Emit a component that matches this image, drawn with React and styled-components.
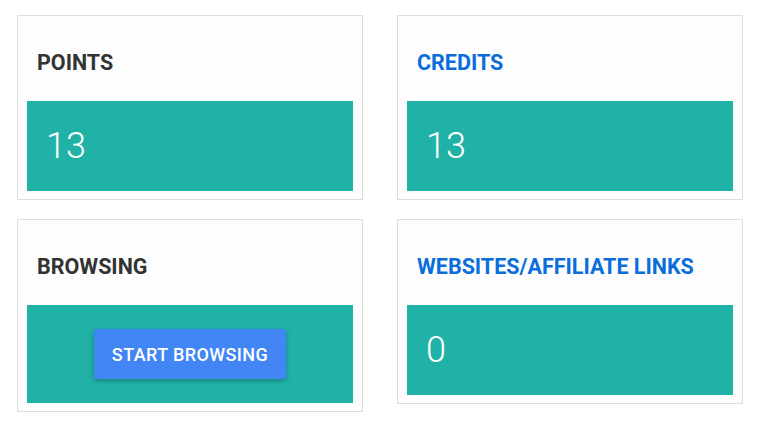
import React from "react";
import styled, { createGlobalStyle } from "styled-components";

const GlobalStyle = createGlobalStyle`
  body {
    margin: 0;
    background: #ffffff;
    font-family: Roboto, "Liberation Sans", sans-serif;
  }
`;

const Page = styled.main`
  display: grid;
  grid-template-columns: 346px 346px;
  column-gap: 34px;
  row-gap: 19px;
  align-items: start;
  padding: 15px 17px;
`;

const Card = styled.section`
  border: 1px solid #dddddd;
  background: #fdfdfd;
  padding: 0 9px 8px;
`;

const Title = styled.h3`
  margin: 0;
  padding: 35px 10px 27px;
  font-size: 21.5px;
  line-height: 23px;
  font-weight: 700;
  color: ${({ $link }) => ($link ? "#0a6ddb" : "#333333")};
`;

const Body = styled.div`
  background: #20b2a6;
  color: #ffffff;
  display: flex;
  align-items: center;
  justify-content: ${({ $center }) => ($center ? "center" : "flex-start")};
  padding: ${({ $center }) => ($center ? "24px 16px" : "25px 19px")};
`;

const Value = styled.span`
  font-size: 36px;
  line-height: 40px;
  font-weight: 300;
`;

const Button = styled.button`
  width: 192px;
  height: 50px;
  border: none;
  border-radius: 2px;
  background: #4285f4;
  color: #ffffff;
  font-family: inherit;
  font-size: 18px;
  letter-spacing: 0.4px;
  font-weight: 500;
  box-shadow: 0 2px 5px rgba(0, 0, 0, 0.26);
  cursor: pointer;
`;

const StatCard = ({ title, value, link }) => (
  <Card>
    <Title $link={link}>{title}</Title>
    <Body>
      <Value>{value}</Value>
    </Body>
  </Card>
);

export default function App() {
  return (
    <>
      <GlobalStyle />
      <Page>
        <StatCard title="POINTS" value="13" />
        <StatCard title="CREDITS" value="13" link />
        <Card>
          <Title>BROWSING</Title>
          <Body $center>
            <Button>START BROWSING</Button>
          </Body>
        </Card>
        <StatCard title="WEBSITES/AFFILIATE LINKS" value="0" link />
      </Page>
    </>
  );
}
